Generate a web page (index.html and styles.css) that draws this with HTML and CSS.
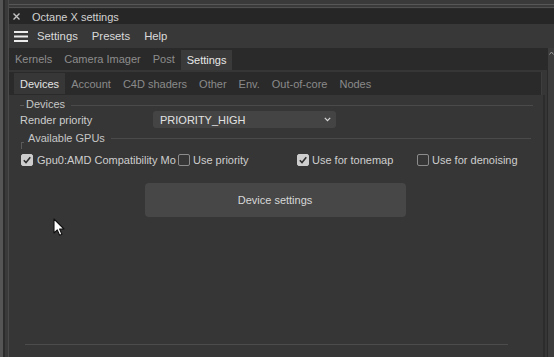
FILE: index.html
```html
<!DOCTYPE html>
<html>
<head>
<meta charset="utf-8">
<link rel="stylesheet" href="styles.css">
</head>
<body>
<div class="app">
  <div class="gutter"></div>
  <div class="win">
    <div class="topstrip"></div>
    <div class="titlebar">
      <svg class="close" width="7" height="7" viewBox="0 0 7 7"><path d="M0.5 0.5 L6.5 6.5 M6.5 0.5 L0.5 6.5" stroke="#c4c4c4" stroke-width="1.4"/></svg>
      <span class="title">Octane X settings</span>
    </div>
    <div class="menubar">
      <svg class="burger" width="14" height="11" viewBox="0 0 14 11"><rect x="0" y="0" width="14" height="2" fill="#ececec"/><rect x="0" y="4.5" width="14" height="2" fill="#ececec"/><rect x="0" y="9" width="14" height="2" fill="#ececec"/></svg>
      <span class="menu">Settings</span>
      <span class="menu">Presets</span>
      <span class="menu">Help</span>
    </div>
    <div class="body">
      <div class="main">
        <div class="tabs">
          <span class="tab">Kernels</span>
          <span class="tab">Camera Imager</span>
          <span class="tab">Post</span>
          <span class="tab active">Settings</span>
        </div>
        <div class="subtabs">
          <span class="stab active">Devices</span>
          <span class="stab">Account</span>
          <span class="stab">C4D shaders</span>
          <span class="stab">Other</span>
          <span class="stab">Env.</span>
          <span class="stab">Out-of-core</span>
          <span class="stab">Nodes</span>
        </div>
        <div class="content">
          <div class="group g1">
            <span class="gtick"></span>
            <span class="glabel">Devices</span>
            <span class="gline"></span>
          </div>
          <div class="row">
            <span class="label">Render priority</span>
            <div class="select">
              <span>PRIORITY_HIGH</span>
              <svg width="7" height="5" viewBox="0 0 7 5"><path d="M0.8 0.8 L3.5 3.6 L6.2 0.8" fill="none" stroke="#d8d8d8" stroke-width="1.2"/></svg>
            </div>
          </div>
          <div class="group g2">
            <span class="gcorner"></span>
            <span class="glabel">Available GPUs</span>
            <span class="gline"></span>
          </div>
          <div class="checks">
            <div class="chk c1"><span class="box on"><svg width="10" height="10" viewBox="0 0 10 10"><path d="M1.8 5.2 L4 7.5 L8.3 2.3" fill="none" stroke="#2e2e2e" stroke-width="1.6"/></svg></span><span class="clabel">Gpu0:AMD Compatibility Mo</span></div>
            <div class="chk"><span class="box"></span><span class="clabel">Use priority</span></div>
            <div class="chk"><span class="box on"><svg width="10" height="10" viewBox="0 0 10 10"><path d="M1.8 5.2 L4 7.5 L8.3 2.3" fill="none" stroke="#2e2e2e" stroke-width="1.6"/></svg></span><span class="clabel">Use for tonemap</span></div>
            <div class="chk"><span class="box"></span><span class="clabel">Use for denoising</span></div>
          </div>
          <button class="btn">Device settings</button>
          <div class="bottomline"></div>
        </div>
      </div>
      <div class="rightcol">
        <svg class="uparrow" width="5" height="4" viewBox="0 0 5 4"><path d="M0.5 3.5 L2.5 1 L4.5 3.5" fill="none" stroke="#9a9a9a" stroke-width="1"/></svg>
      </div>
    </div>
  </div>
  <svg class="cursor" width="13" height="19" viewBox="0 0 13 19"><path d="M1 1 L1 15 L4.3 11.9 L6.6 17.3 L8.9 16.3 L6.6 11 L11 11 Z" fill="#ffffff" stroke="#111111" stroke-width="1.1" stroke-linejoin="round"/></svg>
</div>
</body>
</html>
```
FILE: styles.css
```css
html, body {
  margin: 0;
  padding: 0;
}
body {
  background: #363636;
  font-family: "Liberation Sans", Arial, sans-serif;
  font-size: 11px;
  color: #cfcfcf;
}
.app {
  position: relative;
  width: 554px;
  height: 357px;
  overflow: hidden;
  display: flex;
}
.gutter {
  width: 9px;
  flex: none;
  background: linear-gradient(to right, #555555 0, #555555 3px, #2c2c2c 3px, #2c2c2c 5px, #3a3a3a 5px, #3a3a3a 8px, #4a4a4a 8px);
}
.win {
  flex: 1;
  display: flex;
  flex-direction: column;
  min-width: 0;
}
.topstrip {
  height: 9px;
  flex: none;
  background: linear-gradient(to bottom, #3a3a3a 0, #3a3a3a 4px, #575757 4px, #575757 5px, #3a3a3a 5px, #3a3a3a 7px, #505050 7px, #505050 8px, #2a2a2a 8px);
}
.titlebar {
  height: 15px;
  flex: none;
  background: #262626;
  display: flex;
  align-items: center;
  padding-left: 4px;
}
.close {
  margin-right: 12px;
}
.title {
  color: #d2d2d2;
}
.menubar {
  height: 24px;
  flex: none;
  background: #383838;
  display: flex;
  align-items: center;
  padding-left: 5px;
}
.burger {
  margin-right: 9px;
}
.menu {
  color: #dadada;
  margin-right: 14px;
  font-size: 11.3px;
}
.body {
  flex: 1;
  display: flex;
  min-height: 0;
}
.main {
  flex: 1;
  display: flex;
  flex-direction: column;
  min-width: 0;
  border-right: 1px solid #2a2a2a;
}
.tabs {
  height: 22px;
  flex: none;
  background: #2a2a2a;
  display: flex;
  align-items: stretch;
}
.tab {
  padding: 0 6px;
  display: flex;
  align-items: center;
  color: #8d8d8d;
}
.tab.active {
  background: #3a3a3a;
  color: #e8e8e8;
  margin-top: 2px;
}
.subtabs {
  height: 23px;
  flex: none;
  margin: 2px 5px 0 0;
  background: #2a2a2a;
  border-right: 1px solid #3e3e3e;
  display: flex;
  align-items: stretch;
  padding-left: 5px;
}
.stab {
  padding: 0 6px;
  display: flex;
  align-items: center;
  color: #8a8a8a;
}
.stab.active {
  background: #373737;
  color: #e4e4e4;
  margin: 1px 0;
}
.content {
  flex: 1;
  display: flex;
  flex-direction: column;
  padding: 3px 10px 0 11px;
  border-right: 2px solid #2c2c2c;
  margin-right: 2px;
}
.group {
  display: flex;
  align-items: center;
  height: 12px;
}
.glabel {
  color: #c6c6c6;
  margin-right: 6px;
}
.gline {
  flex: 1;
  height: 1px;
  background: #4a4a4a;
  margin-top: 2px;
}
.gtick {
  width: 4px;
  height: 1px;
  background: #5a5a5a;
  margin-right: 2px;
  margin-top: 2px;
}
.g2 {
  margin-top: 4px;
  padding-left: 1px;
}
.g2 .gline {
  margin-top: 1px;
  margin-right: 2px;
}
.gcorner {
  width: 2px;
  height: 6px;
  border-left: 1px solid #5a5a5a;
  border-top: 1px solid #5a5a5a;
  align-self: flex-end;
  margin-bottom: -5px;
  margin-right: 4px;
}
.row {
  display: flex;
  align-items: center;
  height: 17px;
  margin-top: 1px;
}
.label {
  width: 133px;
  color: #cdcdcd;
}
.select {
  box-sizing: border-box;
  width: 183px;
  height: 17px;
  background: #444444;
  border-radius: 3px;
  display: flex;
  align-items: center;
  justify-content: space-between;
  padding: 0 5px 0 7px;
  color: #e2e2e2;
}
.checks {
  display: grid;
  grid-template-columns: 157px 119px 120px 1fr;
  margin-top: 9px;
  margin-left: 1px;
  height: 13px;
  align-items: center;
}
.chk {
  display: flex;
  align-items: center;
  min-width: 0;
  white-space: nowrap;
}
.box {
  width: 12px;
  height: 12px;
  box-sizing: border-box;
  border: 1px solid #8c8c8c;
  border-radius: 2px;
  flex: none;
  margin-right: 3px;
  display: flex;
  align-items: center;
  justify-content: center;
  background: #363636;
}
.box.on {
  background: #cdcdcd;
  border-color: #cdcdcd;
}
.c1 .box {
  margin-right: 4px;
}
.clabel {
  color: #cecece;
}
.btn {
  align-self: center;
  width: 261px;
  height: 34px;
  margin-top: 17px;
  margin-right: 3px;
  background: #474747;
  border: none;
  border-radius: 4px;
  color: #d8d8d8;
  font-family: "Liberation Sans", Arial, sans-serif;
  font-size: 11px;
}
.bottomline {
  margin-top: auto;
  margin-bottom: 12px;
  margin-left: 5px;
  margin-right: 25px;
  height: 1px;
  background: #4c4c4c;
}
.rightcol {
  width: 6px;
  flex: none;
  background: #3c3c3c;
  position: relative;
}
.uparrow {
  position: absolute;
  left: 1px;
  top: 3px;
}
.cursor {
  position: absolute;
  left: 53px;
  top: 218px;
}
```
